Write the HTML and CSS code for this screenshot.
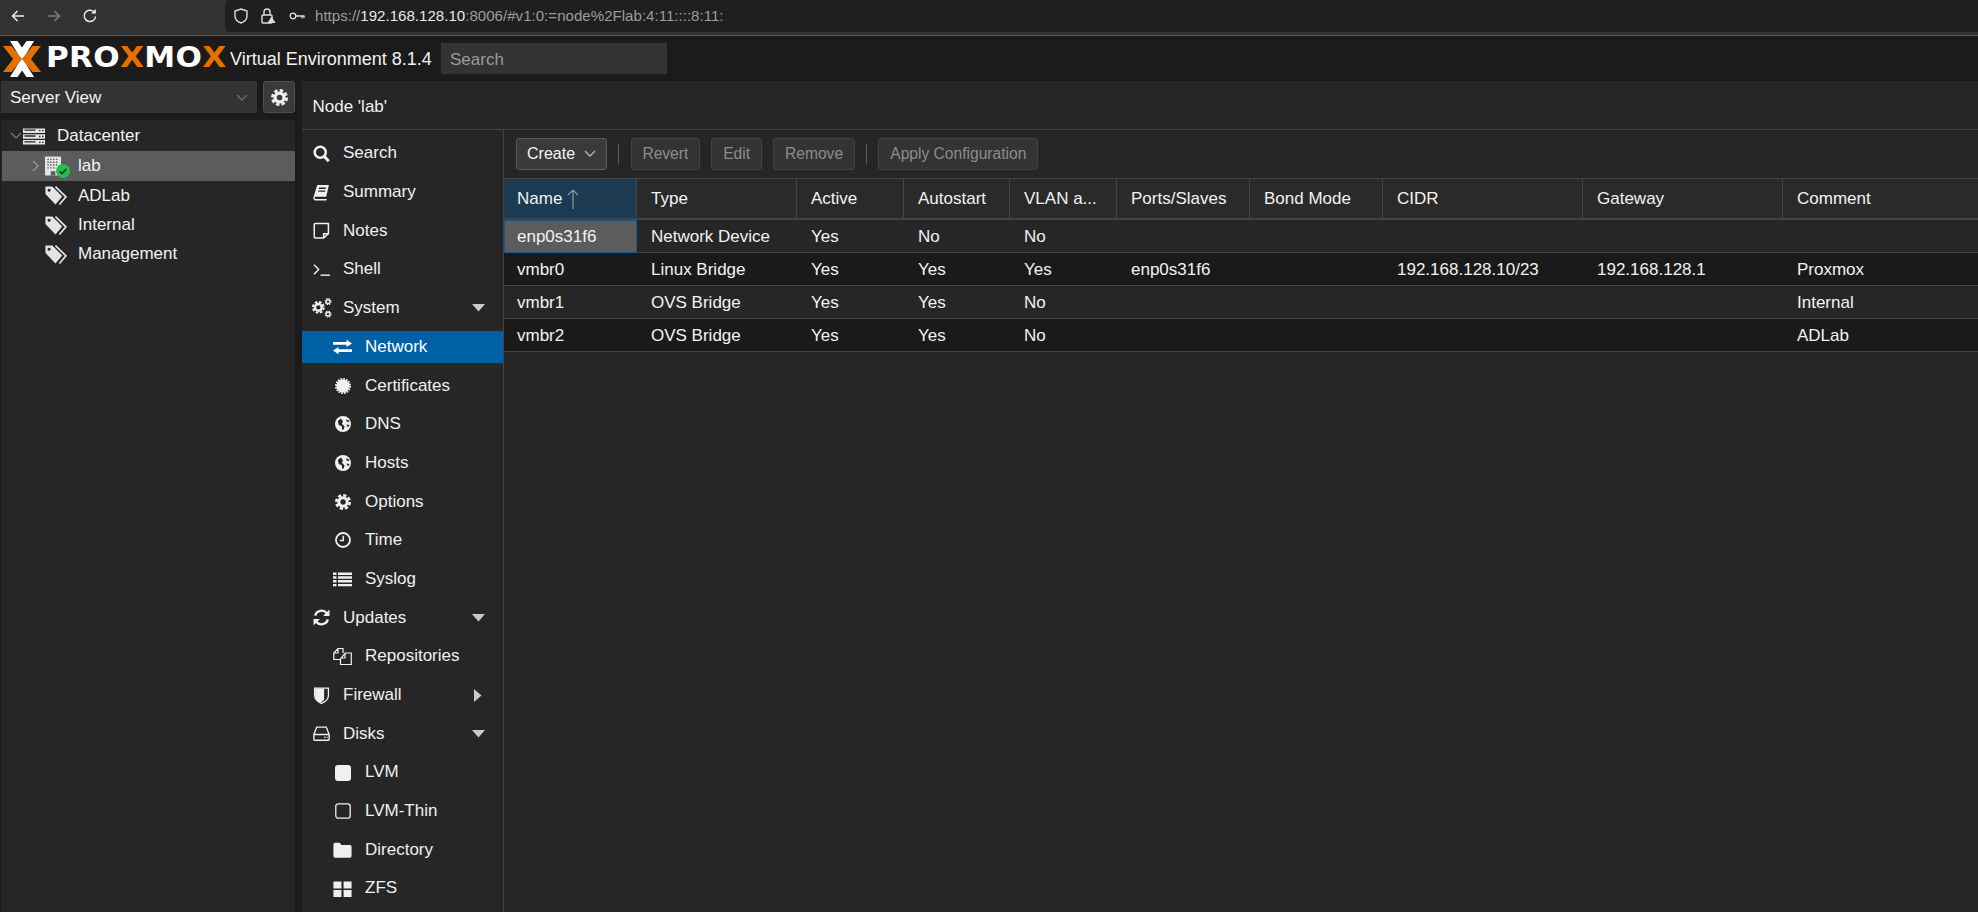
FILE: index.html
```html
<!DOCTYPE html>
<html lang="en">
<head>
<meta charset="utf-8">
<title>lab - Proxmox Virtual Environment</title>
<link rel="stylesheet" href="styles.css">
</head>
<body>
<svg class="sprite" aria-hidden="true">
  <symbol id="i-tag" viewBox="0 0 24 20"><path d="M1 1.500h6.500l9.500 9.500-6.500 7.500L1 8.500z M4.500 3.500a1.500 1.500 0 1 0 .01 0z" fill="currentColor" fill-rule="evenodd"/><path d="M10.500 1.500l10 9.800-6.200 7.200" fill="none" stroke="currentColor" stroke-width="1.600"/></symbol>
  <symbol id="i-globe" viewBox="0 0 16 16"><circle cx="8" cy="8" r="8" fill="currentColor"/><path d="M6 2.500L2.800 5l1 4 3 1.200.3 3.500 1.800-.5.6-3-2.700-2.400L8 5.500zM11 3.200l.5 2 2.300 1 .7-1.500zM11.500 8.600l1.500 2.800 1.500-2.400z" fill="#262626"/></symbol>
  <symbol id="i-gear" viewBox="0 0 16 16"><circle cx="8" cy="8" r="4.200" fill="none" stroke="currentColor" stroke-width="3"/><circle cx="8" cy="8" r="6.700" fill="none" stroke="currentColor" stroke-width="2.600" stroke-dasharray="3.200 2.060"/></symbol>
  <symbol id="i-caret-down" viewBox="0 0 13 8"><path d="M0 0h13L6.500 7.500z" fill="currentColor"/></symbol>
</svg>

<header class="browser">
  <div class="browser-nav">
    <svg class="bicon" viewBox="0 0 16 16"><path d="M14 8H2.500M7.500 3l-5 5 5 5" fill="none" stroke="currentColor" stroke-width="1.500"/></svg>
    <svg class="bicon dim" viewBox="0 0 16 16"><path d="M2 8h11.500M8.500 3l5 5-5 5" fill="none" stroke="currentColor" stroke-width="1.500"/></svg>
    <svg class="bicon" viewBox="0 0 16 16"><path d="M13.600 8.500a5.700 5.700 0 1 1-2-5" fill="none" stroke="currentColor" stroke-width="1.500"/><path d="M13.800 1v4.600H9.200z" fill="currentColor"/></svg>
  </div>
  <div class="urlbar">
    <svg class="uicon" viewBox="0 0 16 16"><path d="M8 1l6 2v5c0 3.400-2.600 5.800-6 7-3.400-1.200-6-3.600-6-7V3z" fill="none" stroke="currentColor" stroke-width="1.400"/></svg>
    <svg class="uicon lock" viewBox="0 0 16 16"><rect x="2" y="7" width="10" height="8" rx="1" fill="none" stroke="currentColor" stroke-width="1.400"/><path d="M4 7V4a3 3 0 0 1 6 0v3" fill="none" stroke="currentColor" stroke-width="1.400"/><path d="M11.500 8.500l4 6.500h-8z" fill="currentColor"/></svg>
    <svg class="uicon key" viewBox="0 0 16 16"><circle cx="4" cy="8" r="2.800" fill="none" stroke="currentColor" stroke-width="1.300"/><path d="M7 8h8.500M13 8v2.500M15 8v2" fill="none" stroke="currentColor" stroke-width="1.300"/></svg>
    <span class="url"><span class="url-dim">https://</span>192.168.128.10<span class="url-dim">:8006/#v1:0:=node%2Flab:4:11::::8:11:</span></span>
  </div>
</header>

<div class="pve-header">
  <div class="logo">
    <svg class="logo-x" viewBox="0 0 38 36">
      <path d="M0 5h8.500L19 18 8.500 31H0l10-13z" fill="#e57000"/>
      <path d="M38 5h-8.500L19 18l10.500 13H38L28 18z" fill="#e57000"/>
      <path d="M7 0h7.500L19 6.500 23.500 0H31L23 13l-4 5-4-5zM7 36h7.500l4.500-6.500 4.500 6.500H31L23 23l-4-5-4 5z" fill="#fff"/>
    </svg>
    <span class="logo-text">PRO<b>X</b>MO<b>X</b></span>
  </div>
  <span class="version">Virtual Environment 8.1.4</span>
  <div class="global-search">Search</div>
</div>

<div class="workspace">
  <aside class="side">
    <div class="view-row">
      <div class="view-select"><span>Server View</span>
        <svg class="chev" viewBox="0 0 12 8"><path d="M1 1l5 5 5-5" fill="none" stroke="currentColor" stroke-width="1.400"/></svg>
      </div>
      <button class="gear-btn"><svg class="ico" viewBox="0 0 16 16"><use href="#i-gear"/></svg></button>
    </div>
    <nav class="tree">
      <div class="tree-row lvl0">
        <svg class="twist" viewBox="0 0 12 8"><path d="M1 1l5 5 5-5" fill="none" stroke="currentColor" stroke-width="1.200"/></svg>
        <svg class="dc-ico" viewBox="0 0 22 16"><path d="M0 0h22v4.400H0zM0 5.800h22v4.400H0zM0 11.600h22V16H0z" fill="currentColor"/><path d="M1.500 1.700h11M1.500 7.500h11M1.500 13.300h11" stroke="#262626" stroke-width="1.300"/><path d="M16 2.200h1.500M19 2.200h1.500M16 8h1.500M19 8h1.500M16 13.800h1.500M19 13.800h1.500" stroke="#262626" stroke-width="1.300"/></svg>
        <span>Datacenter</span>
      </div>
      <div class="tree-row lvl1 selected">
        <svg class="twist small" viewBox="0 0 8 12"><path d="M1 1l5 5-5 5" fill="none" stroke="currentColor" stroke-width="1.200"/></svg>
        <span class="node-ico">
          <svg class="bld" viewBox="0 0 18 20"><path d="M0 0h17v20H0z" fill="#e4e4e4"/><path d="M2.500 3h12M2.500 6h12M2.500 9h12M2.500 12h8" stroke="#5c5c5c" stroke-width="1.500" stroke-dasharray="1.500 1.500"/><path d="M6 15.500h5V20H6z" fill="#5c5c5c"/></svg>
          <svg class="ok" viewBox="0 0 14 14"><circle cx="7" cy="7" r="7" fill="#21bf4b"/><path d="M3.800 7.300l2.300 2.300 4.200-4.600" fill="none" stroke="#2d2d2d" stroke-width="1.700"/></svg>
        </span>
        <span>lab</span>
      </div>
      <div class="tree-row lvl1"><svg class="tag" viewBox="0 0 24 20"><use href="#i-tag"/></svg><span>ADLab</span></div>
      <div class="tree-row lvl1"><svg class="tag" viewBox="0 0 24 20"><use href="#i-tag"/></svg><span>Internal</span></div>
      <div class="tree-row lvl1"><svg class="tag" viewBox="0 0 24 20"><use href="#i-tag"/></svg><span>Management</span></div>
    </nav>
  </aside>

  <main class="main">
    <div class="title">Node 'lab'</div>
    <div class="panel">
      <nav class="menu">
        <a class="mi"><svg class="ico" viewBox="0 0 16 16"><circle cx="6.800" cy="6.800" r="5.200" fill="none" stroke="currentColor" stroke-width="2.400"/><path d="M10.500 10.500l4.300 4.800" stroke="currentColor" stroke-width="2.800"/></svg>Search</a>
        <a class="mi"><svg class="ico" viewBox="0 0 16 16"><path d="M4 1h11l-2.600 11H2.500a1 1 0 0 0-.1 2H13l-.4 1.500H2.300C.8 15.500 0 14 .400 12.500z" fill="currentColor"/><path d="M5.500 4h6.500M5 6.800h6.500" stroke="#262626" stroke-width="1.200"/></svg>Summary</a>
        <a class="mi"><svg class="ico" viewBox="0 0 16 16"><path d="M2 1.500h12.500v9.500l-4.500 4H2a.8.8 0 0 1-.8-.8V2.300a.8.8 0 0 1 .8-.8z M10 15v-4h4.500" fill="none" stroke="currentColor" stroke-width="1.400"/></svg>Notes</a>
        <a class="mi"><svg class="ico" viewBox="0 0 18 14"><path d="M1 2l5 5-5 5" fill="none" stroke="currentColor" stroke-width="1.500"/><path d="M8 13h10" stroke="currentColor" stroke-width="1.500"/></svg>Shell</a>
        <a class="mi"><svg class="ico cogs" viewBox="0 0 20 20"><g transform="translate(0 3) scale(.8)"><use href="#i-gear" width="16" height="16"/></g><g transform="translate(12.500 0) scale(.45)"><use href="#i-gear" width="16" height="16"/></g><g transform="translate(12.500 12.500) scale(.45)"><use href="#i-gear" width="16" height="16"/></g></svg>System<svg class="caret" viewBox="0 0 13 8"><use href="#i-caret-down"/></svg></a>
        <a class="mi sub active"><svg class="ico wide" viewBox="0 0 19 15"><path d="M0 2.600h13.500V.3L19 3.900l-5.500 3.600V5.200H0z" fill="currentColor"/><path d="M19 9.800H5.500V7.500L0 11.100l5.500 3.600v-2.300H19z" fill="currentColor"/></svg>Network</a>
        <a class="mi sub"><svg class="ico" viewBox="0 0 16 16"><circle cx="8" cy="8" r="6.500" fill="currentColor"/><circle cx="8" cy="8" r="7" fill="none" stroke="currentColor" stroke-width="2" stroke-dasharray="1.700 1.050"/></svg>Certificates</a>
        <a class="mi sub"><svg class="ico" viewBox="0 0 16 16"><use href="#i-globe"/></svg>DNS</a>
        <a class="mi sub"><svg class="ico" viewBox="0 0 16 16"><use href="#i-globe"/></svg>Hosts</a>
        <a class="mi sub"><svg class="ico" viewBox="0 0 16 16"><use href="#i-gear"/></svg>Options</a>
        <a class="mi sub"><svg class="ico" viewBox="0 0 16 16"><circle cx="8" cy="8" r="7" fill="none" stroke="currentColor" stroke-width="1.800"/><path d="M8.300 3.800v4.700H4.800" fill="none" stroke="currentColor" stroke-width="1.500"/></svg>Time</a>
        <a class="mi sub"><svg class="ico wide" viewBox="0 0 19 15"><path d="M0 1h3.500v2.400H0zM5 1h14v2.400H5zM0 4.800h3.500v2.400H0zM5 4.800h14v2.400H5zM0 8.600h3.500V11H0zM5 8.600h14V11H5zM0 12.400h3.500v2.400H0zM5 12.400h14v2.400H5z" fill="currentColor"/></svg>Syslog</a>
        <a class="mi"><svg class="ico" viewBox="0 0 16 16"><path d="M2 6.200A6.300 6.300 0 0 1 13 4" fill="none" stroke="currentColor" stroke-width="2.200"/><path d="M15.500 .5v6h-6z" fill="currentColor"/><path d="M14 9.800A6.300 6.300 0 0 1 3 12" fill="none" stroke="currentColor" stroke-width="2.200"/><path d="M.5 15.500v-6h6z" fill="currentColor"/></svg>Updates<svg class="caret" viewBox="0 0 13 8"><use href="#i-caret-down"/></svg></a>
        <a class="mi sub"><svg class="ico wide tall" viewBox="0 0 19 18"><path d="M12 5.500h6.300V17H7.500v-5.500zM12 5.500v5H7.500" fill="none" stroke="currentColor" stroke-width="1.200"/><path d="M10 5.500V1H5L.8 5.500v6.500h6.500M5 1v4.500H.8" fill="none" stroke="currentColor" stroke-width="1.200"/></svg>Repositories</a>
        <a class="mi"><svg class="ico" viewBox="0 0 16 16"><path d="M1.500 1h13v7c0 3.500-3 6-6.500 7.500C4.500 14 1.500 11.500 1.500 8z" fill="none" stroke="currentColor" stroke-width="1.200"/><path d="M2 1.500h6v13.500C4.500 14 2 11.500 2 8z M8 1.500h2.500v10.500L8 14z" fill="currentColor"/></svg>Firewall<svg class="caret side-caret" viewBox="0 0 8 13"><path d="M0 0v13l7.500-6.500z" fill="currentColor"/></svg></a>
        <a class="mi"><svg class="ico" viewBox="0 0 16 14"><path d="M.8 8L3.500 1h9l2.700 7v4.500a.8.8 0 0 1-.8.8H1.600a.8.8 0 0 1-.8-.8zM.8 8h14.400" fill="none" stroke="currentColor" stroke-width="1.300"/><path d="M10.500 10.600h1.500M13 10.600h.8" stroke="currentColor" stroke-width="1.300"/></svg>Disks<svg class="caret" viewBox="0 0 13 8"><use href="#i-caret-down"/></svg></a>
        <a class="mi sub"><svg class="ico" viewBox="0 0 16 16"><rect width="16" height="16" rx="3" fill="currentColor"/></svg>LVM</a>
        <a class="mi sub"><svg class="ico" viewBox="0 0 16 16"><rect x=".8" y=".8" width="14.400" height="14.400" rx="2.500" fill="none" stroke="currentColor" stroke-width="1.300"/></svg>LVM-Thin</a>
        <a class="mi sub"><svg class="ico wide" viewBox="0 0 17 15"><path d="M0 2.200A1.500 1.500 0 0 1 1.500.7h4.300l1.700 2h8a1.500 1.500 0 0 1 1.500 1.500v9A1.500 1.500 0 0 1 15.500 14.700h-14A1.500 1.500 0 0 1 0 13.200z" fill="currentColor"/></svg>Directory</a>
        <a class="mi sub"><svg class="ico wide" viewBox="0 0 17 15"><path d="M0 .5h7.500v6.500H0zM9.500 .5H17v6.500H9.500zM0 8.500h7.500v6.500H0zM9.500 8.500H17v6.500H9.500z" fill="currentColor"/></svg>ZFS</a>
      </nav>
      <section class="content">
        <div class="toolbar">
          <button class="btn primary">Create<svg class="chev" viewBox="0 0 12 8"><path d="M1 1l5 5 5-5" fill="none" stroke="currentColor" stroke-width="1.400"/></svg></button>
          <span class="tsep"></span>
          <button class="btn off">Revert</button>
          <button class="btn off">Edit</button>
          <button class="btn off">Remove</button>
          <span class="tsep"></span>
          <button class="btn off">Apply Configuration</button>
        </div>
        <table class="grid">
          <colgroup><col class="c1"><col class="c2"><col class="c3"><col class="c4"><col class="c5"><col class="c6"><col class="c7"><col class="c8"><col class="c9"><col class="c10"></colgroup>
          <thead>
            <tr><th class="sorted">Name<svg class="sort" viewBox="0 0 12 20"><path d="M6 20V1M1 6l5-5 5 5" fill="none" stroke="currentColor" stroke-width="1.200"/></svg></th><th>Type</th><th>Active</th><th>Autostart</th><th>VLAN a...</th><th>Ports/Slaves</th><th>Bond Mode</th><th>CIDR</th><th>Gateway</th><th>Comment</th></tr>
          </thead>
          <tbody>
            <tr><td class="focus">enp0s31f6</td><td>Network Device</td><td>Yes</td><td>No</td><td>No</td><td></td><td></td><td></td><td></td><td></td></tr>
            <tr class="alt"><td>vmbr0</td><td>Linux Bridge</td><td>Yes</td><td>Yes</td><td>Yes</td><td>enp0s31f6</td><td></td><td>192.168.128.10/23</td><td>192.168.128.1</td><td>Proxmox</td></tr>
            <tr><td>vmbr1</td><td>OVS Bridge</td><td>Yes</td><td>Yes</td><td>No</td><td></td><td></td><td></td><td></td><td>Internal</td></tr>
            <tr class="alt"><td>vmbr2</td><td>OVS Bridge</td><td>Yes</td><td>Yes</td><td>No</td><td></td><td></td><td></td><td></td><td>ADLab</td></tr>
          </tbody>
        </table>
      </section>
    </div>
  </main>
</div>
</body>
</html>
```
FILE: styles.css
```css
* { box-sizing: border-box; }
html, body { margin: 0; height: 100%; }
body {
  width: 1978px; height: 912px; overflow: hidden;
  display: flex; flex-direction: column;
  background: #1b1b1b; color: #f2f2f2;
  font: 17px/1.2 "Liberation Sans", Arial, sans-serif;
}
.sprite { display: none; }
svg { display: block; flex: none; }

/* browser chrome */
.browser { height: 36px; flex: none; display: flex; background: #333333; border-bottom: 1px solid #5a5a5a; padding-bottom: 3px; }
.browser-nav { width: 225px; display: flex; align-items: center; gap: 20px; padding-left: 10px; color: #eeeeee; }
.bicon { width: 16px; height: 16px; }
.bicon.dim { color: #7d7d7d; }
.urlbar { flex: 1; display: flex; align-items: center; background: #1f1f1f; border-radius: 4px 0 0 4px; padding-left: 8px; color: #dddddd; }
.uicon { width: 16px; height: 18px; }
.uicon.lock { margin-left: 11px; }
.uicon.key { margin-left: 13px; }
.url { margin-left: 10px; font-size: 15.100px; color: #e8e8e8; }
.url-dim { color: #9c9c9c; }

/* pve header */
.pve-header { height: 45px; flex: none; display: flex; align-items: center; padding-left: 3px; background: #1b1b1b; }
.logo { width: 227px; display: flex; align-items: center; }
.logo-x { width: 38px; height: 36px; }
.logo-text { display: inline-block; margin-left: 5px; font: 700 28.500px/1 "DejaVu Sans", sans-serif; letter-spacing: .3px; color: #ffffff; transform: scaleX(1.090); transform-origin: left center; }
.logo-text b { color: #e57000; }
.version { width: 211px; padding-top: 2px; font-size: 18px; }
.global-search { width: 226px; height: 31px; padding: 7px 9px 0; background: #333333; color: #999999; }

/* workspace */
.workspace { flex: 1; min-height: 0; display: flex; }
.side { width: 302px; flex: none; padding: 0 7px 0 1px; display: flex; flex-direction: column; }
.view-row { display: flex; justify-content: space-between; height: 32px; flex: none; }
.view-select { width: 256px; display: flex; align-items: center; justify-content: space-between; padding: 2px 9px 0; background: #333333; }
.view-select .chev { color: #6d6d6d; }
.chev { width: 12px; height: 8px; }
.gear-btn { width: 32px; padding: 0; display: flex; align-items: center; justify-content: center; background: #3a3a3a; border: 1px solid #505050; border-radius: 3px; color: #f2f2f2; }
.gear-btn .ico { margin: 0; }
.tree { margin-top: 7px; flex: 1; background: #262626; padding-top: 1px; }
.tree-row { height: 29.400px; display: flex; align-items: center; }
.tree-row.lvl0 { height: 30px; padding-left: 9px; }
.tree-row.lvl1 { padding-left: 43px; }
.tree-row.selected { height: 30px; margin-left: 1px; padding-left: 30px; background: #5c5c5c; }
.twist { width: 12px; height: 8px; color: #7a7a7a; }
.twist.small { width: 8px; height: 12px; margin-right: 5px; color: #9a9a9a; }
.dc-ico { width: 22px; height: 17px; margin-left: 1px; margin-right: 12px; color: #e4e4e4; }
.node-ico { position: relative; width: 33px; height: 22px; }
.bld { width: 17px; height: 22px; }
.ok { position: absolute; left: 11px; top: 9px; width: 14px; height: 14px; }
.tag { width: 26px; height: 21px; margin-right: 8px; color: #e4e4e4; }

/* main */
.main { flex: 1; min-width: 0; display: flex; flex-direction: column; background: #262626; }
.title { height: 49px; flex: none; padding: 16px 8px 0 10.500px; border-bottom: 1px solid #444444; }
.panel { flex: 1; min-height: 0; display: flex; }
.menu { width: 202px; flex: none; display: flex; flex-direction: column; gap: 6.700px; padding-top: 7.600px; border-right: 1px solid #444444; }
.mi { height: 32px; flex: none; display: flex; align-items: center; padding-left: 11px; color: #f0f0f0; }
.mi .caret { width: 13px; height: 8px; margin-left: auto; margin-right: 18px; color: #c9c9c9; }
.mi .side-caret { width: 8px; height: 13px; margin-right: 21px; }
.mi.sub { padding-left: 33px; }
.mi.active { background: #0060a6; color: #ffffff; }
.ico { width: 17px; height: 17px; margin-right: 13px; color: #f0f0f0; }
.sub .ico { width: 16px; height: 16px; margin-right: 14px; }
.sub .ico.wide { width: 19px; margin-left: -2px; margin-right: 13px; }
.sub .ico.tall { height: 19px; }
.ico.cogs { width: 20px; height: 20px; margin-left: -1px; margin-right: 11px; }
.mi.active .ico { color: #ffffff; }

.content { flex: 1; min-width: 0; display: flex; flex-direction: column; }
.toolbar { height: 49px; flex: none; display: flex; align-items: center; gap: 11.300px; padding: 0 12px; border-bottom: 1px solid #444444; }
.btn { height: 32px; padding: 0 10.800px; display: flex; align-items: center; font: inherit; font-size: 15.600px; border-radius: 3px; }
.btn.primary { width: 91px; padding: 0 10px; justify-content: space-between; font-size: 16px; background: #3a3a3a; border: 1px solid #595959; color: #f2f2f2; }
.btn.primary .chev { color: #b0b0b0; }
.btn.off { background: #333333; border: 1px solid #424242; color: #8c8c8c; }
.tsep { width: 1px; height: 20px; background: #5a5a5a; }

.grid { width: 1474px; table-layout: fixed; border-collapse: separate; border-spacing: 0; }
.c1 { width: 133px; } .c2 { width: 160px; } .c3 { width: 107px; } .c4 { width: 106px; } .c5 { width: 107px; }
.c6 { width: 133px; } .c7 { width: 133px; } .c8 { width: 200px; } .c9 { width: 200px; } .c10 { width: 195px; }
.grid th { height: 41px; padding: 1px 14px 0; text-align: left; font-weight: 400; background: #2a2a2a; border-right: 1px solid #444444; border-bottom: 2px solid #444444; white-space: nowrap; }
.grid th:last-child { border-right: 0; }
.grid th.sorted { padding: 1px 13px 0; background: #1c3a51; }
.sort { display: inline-block; width: 12px; height: 20px; margin-left: 5px; vertical-align: middle; color: #8a98a3; }
.grid td { height: 33px; padding: 3px 14px 0; background: #262626; border-bottom: 1px solid #444444; white-space: nowrap; }
.grid .alt td { background: #1a1a1a; }
.grid td.focus { background: #5c5c5c; border: 1px solid #17598d; padding: 2px 12px 0; }
.grid tr td:first-child { padding-left: 13px; }
.grid tr td.focus:first-child { padding-left: 12px; }
```
